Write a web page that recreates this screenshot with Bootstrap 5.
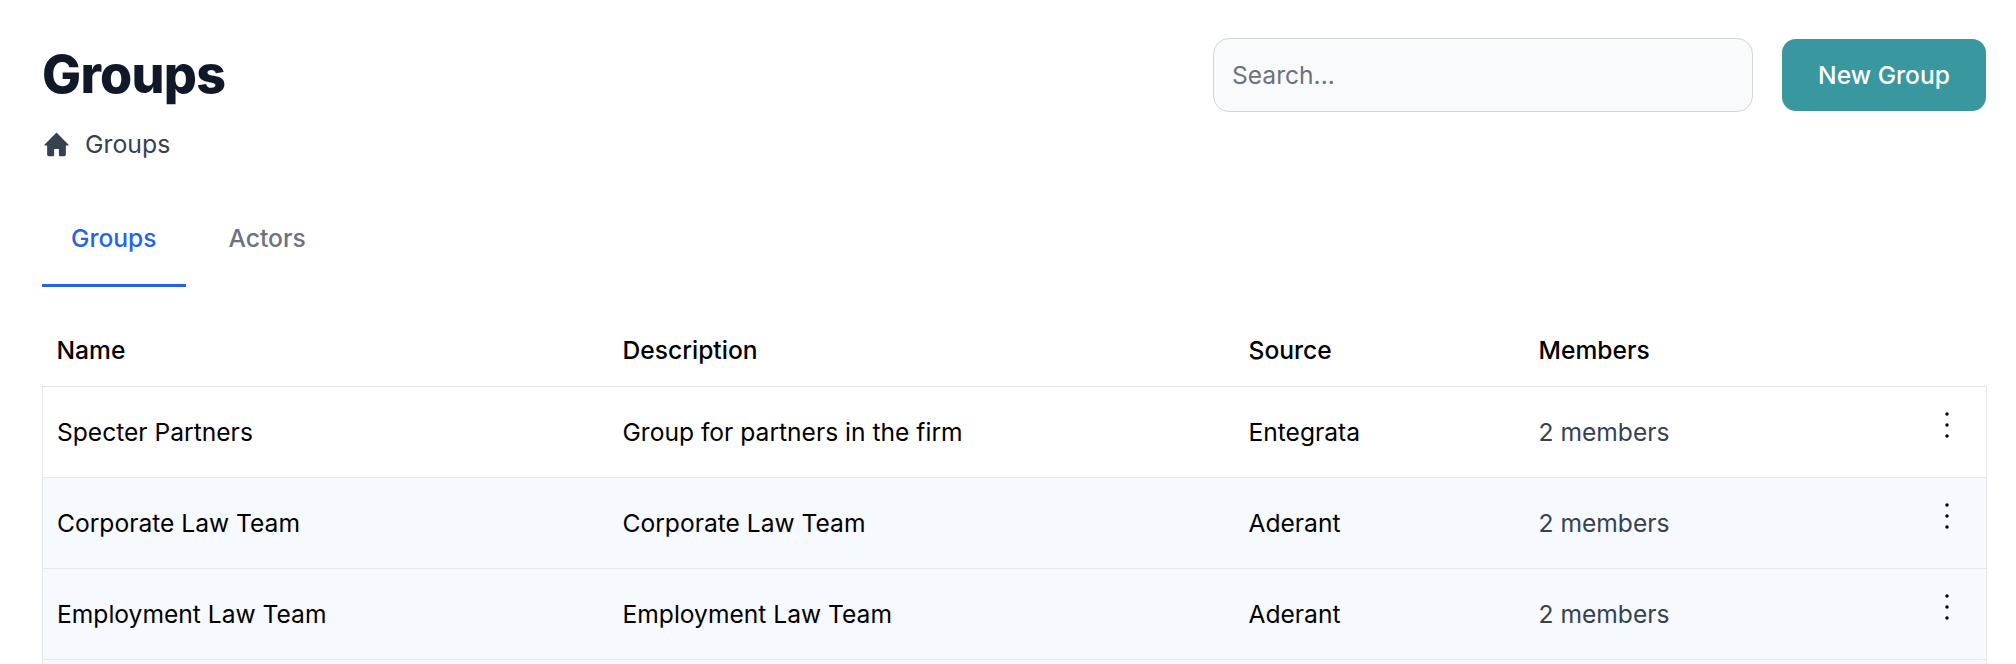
<!DOCTYPE html>
<html lang="en">
<head>
<meta charset="utf-8">
<title>Groups</title>
<link href="https://cdn.jsdelivr.net/npm/bootstrap@5.3.0/dist/css/bootstrap.min.css" rel="stylesheet">
<style>
html, body { height: 664px; overflow: hidden; }
body { font-family: Inter, "Liberation Sans", sans-serif; background: #fff; color: #000; }
.page-wrap { padding: 38px 30px 0 42px; }
.page-title { font-size: 52px; font-weight: 800; line-height: 60px; color: #111827; letter-spacing: -0.75px; margin: 7px 0 0; }
.crumb { margin-top: 23px; margin-left: 2px; gap: 16px; font-size: 24.8px; line-height: 32px; color: #374151; font-weight: 400; }
.crumb svg { width: 25px; height: 25px; }
.search-box { width: 540px; height: 74px; padding: 0 18px; font-size: 24.6px; border: 1px solid #d1d5db; border-radius: 16px; background: #f9fafb; color: #6b7280; }
.search-box::placeholder { color: #6b7280; opacity: 1; }
.new-btn { width: 204px; height: 72px; margin-left: 29px; padding: 0; font-size: 24.6px; font-weight: 500; color: #fff; background: #38979f; border: 0; border-radius: 14px; }
.tab-row { margin-top: 32px; gap: 14px; }
.tab-item { padding: 30px 29px; font-size: 24.6px; line-height: 32px; font-weight: 500; color: #6b7280; border-bottom: 3px solid transparent; text-decoration: none; }
.tab-item.is-on { color: #2563eb; border-bottom-color: #2563eb; }
.grp-table { margin: 29px 0 0; width: 1944px; table-layout: fixed; border-collapse: collapse; font-size: 24.6px; --bs-table-bg: transparent; }
.grp-table th { height: 70px; padding: 0 14px; font-weight: 500; border: 0; vertical-align: middle; color: #000; }
.grp-table td { height: 91px; padding: 2px 14px 0; border: 1px solid #e5e7eb; border-left-width: 0; border-right-width: 0; vertical-align: middle; color: #000; }
.grp-table td:first-child { border-left-width: 1px; }
.grp-table td:last-child { border-right-width: 1px; }
.grp-table tbody tr.tint td { background: #f6f9fe; }
.grp-table td.mem { color: #374151; }
.dots-cell { text-align: right; }
.dots-cell svg { display: block; width: 4px; height: 26px; margin: -15px 23px 0 auto; }
</style>
</head>
<body>
<div class="page-wrap">
  <div class="d-flex justify-content-between align-items-start">
    <div>
      <h1 class="page-title">Groups</h1>
      <div class="crumb d-flex align-items-center">
        <svg viewBox="0 0 24 24" fill="#374151" aria-hidden="true"><path d="M12 .5.6 11.900c-.5.500-.2 1.100.4 1.100h2v8.700c0 .9.700 1.600 1.600 1.600h4.200c.5 0 .9-.4.9-.9v-6.200h4.600v6.200c0 .5.400.9.900.9h4.200c.9 0 1.600-.7 1.600-1.600V13h2c.6 0 .9-.6.400-1.100z"/></svg>
        <span>Groups</span>
      </div>
    </div>
    <div class="d-flex align-items-center">
      <input class="form-control search-box" type="text" placeholder="Search...">
      <button class="btn new-btn" type="button">New Group</button>
    </div>
  </div>
  <div class="tab-row d-flex">
    <a class="tab-item is-on" href="#">Groups</a>
    <a class="tab-item" href="#">Actors</a>
  </div>
  <table class="table grp-table">
    <colgroup><col style="width:566px"><col style="width:626px"><col style="width:290px"><col style="width:363px"><col style="width:99px"></colgroup>
    <thead><tr><th>Name</th><th>Description</th><th>Source</th><th>Members</th><th></th></tr></thead>
    <tbody>
      <tr><td>Specter Partners</td><td>Group for partners in the firm</td><td>Entegrata</td><td class="mem">2 members</td><td class="dots-cell"><svg viewBox="0 0 4 26" fill="#000"><circle cx="2" cy="2" r="1.750"/><circle cx="2" cy="13" r="1.750"/><circle cx="2" cy="24" r="1.750"/></svg></td></tr>
      <tr class="tint"><td>Corporate Law Team</td><td>Corporate Law Team</td><td>Aderant</td><td class="mem">2 members</td><td class="dots-cell"><svg viewBox="0 0 4 26" fill="#000"><circle cx="2" cy="2" r="1.750"/><circle cx="2" cy="13" r="1.750"/><circle cx="2" cy="24" r="1.750"/></svg></td></tr>
      <tr class="tint"><td>Employment Law Team</td><td>Employment Law Team</td><td>Aderant</td><td class="mem">2 members</td><td class="dots-cell"><svg viewBox="0 0 4 26" fill="#000"><circle cx="2" cy="2" r="1.750"/><circle cx="2" cy="13" r="1.750"/><circle cx="2" cy="24" r="1.750"/></svg></td></tr>
      <tr class="tint"><td>&nbsp;</td><td></td><td></td><td></td><td></td></tr>
    </tbody>
  </table>
</div>
</body>
</html>
